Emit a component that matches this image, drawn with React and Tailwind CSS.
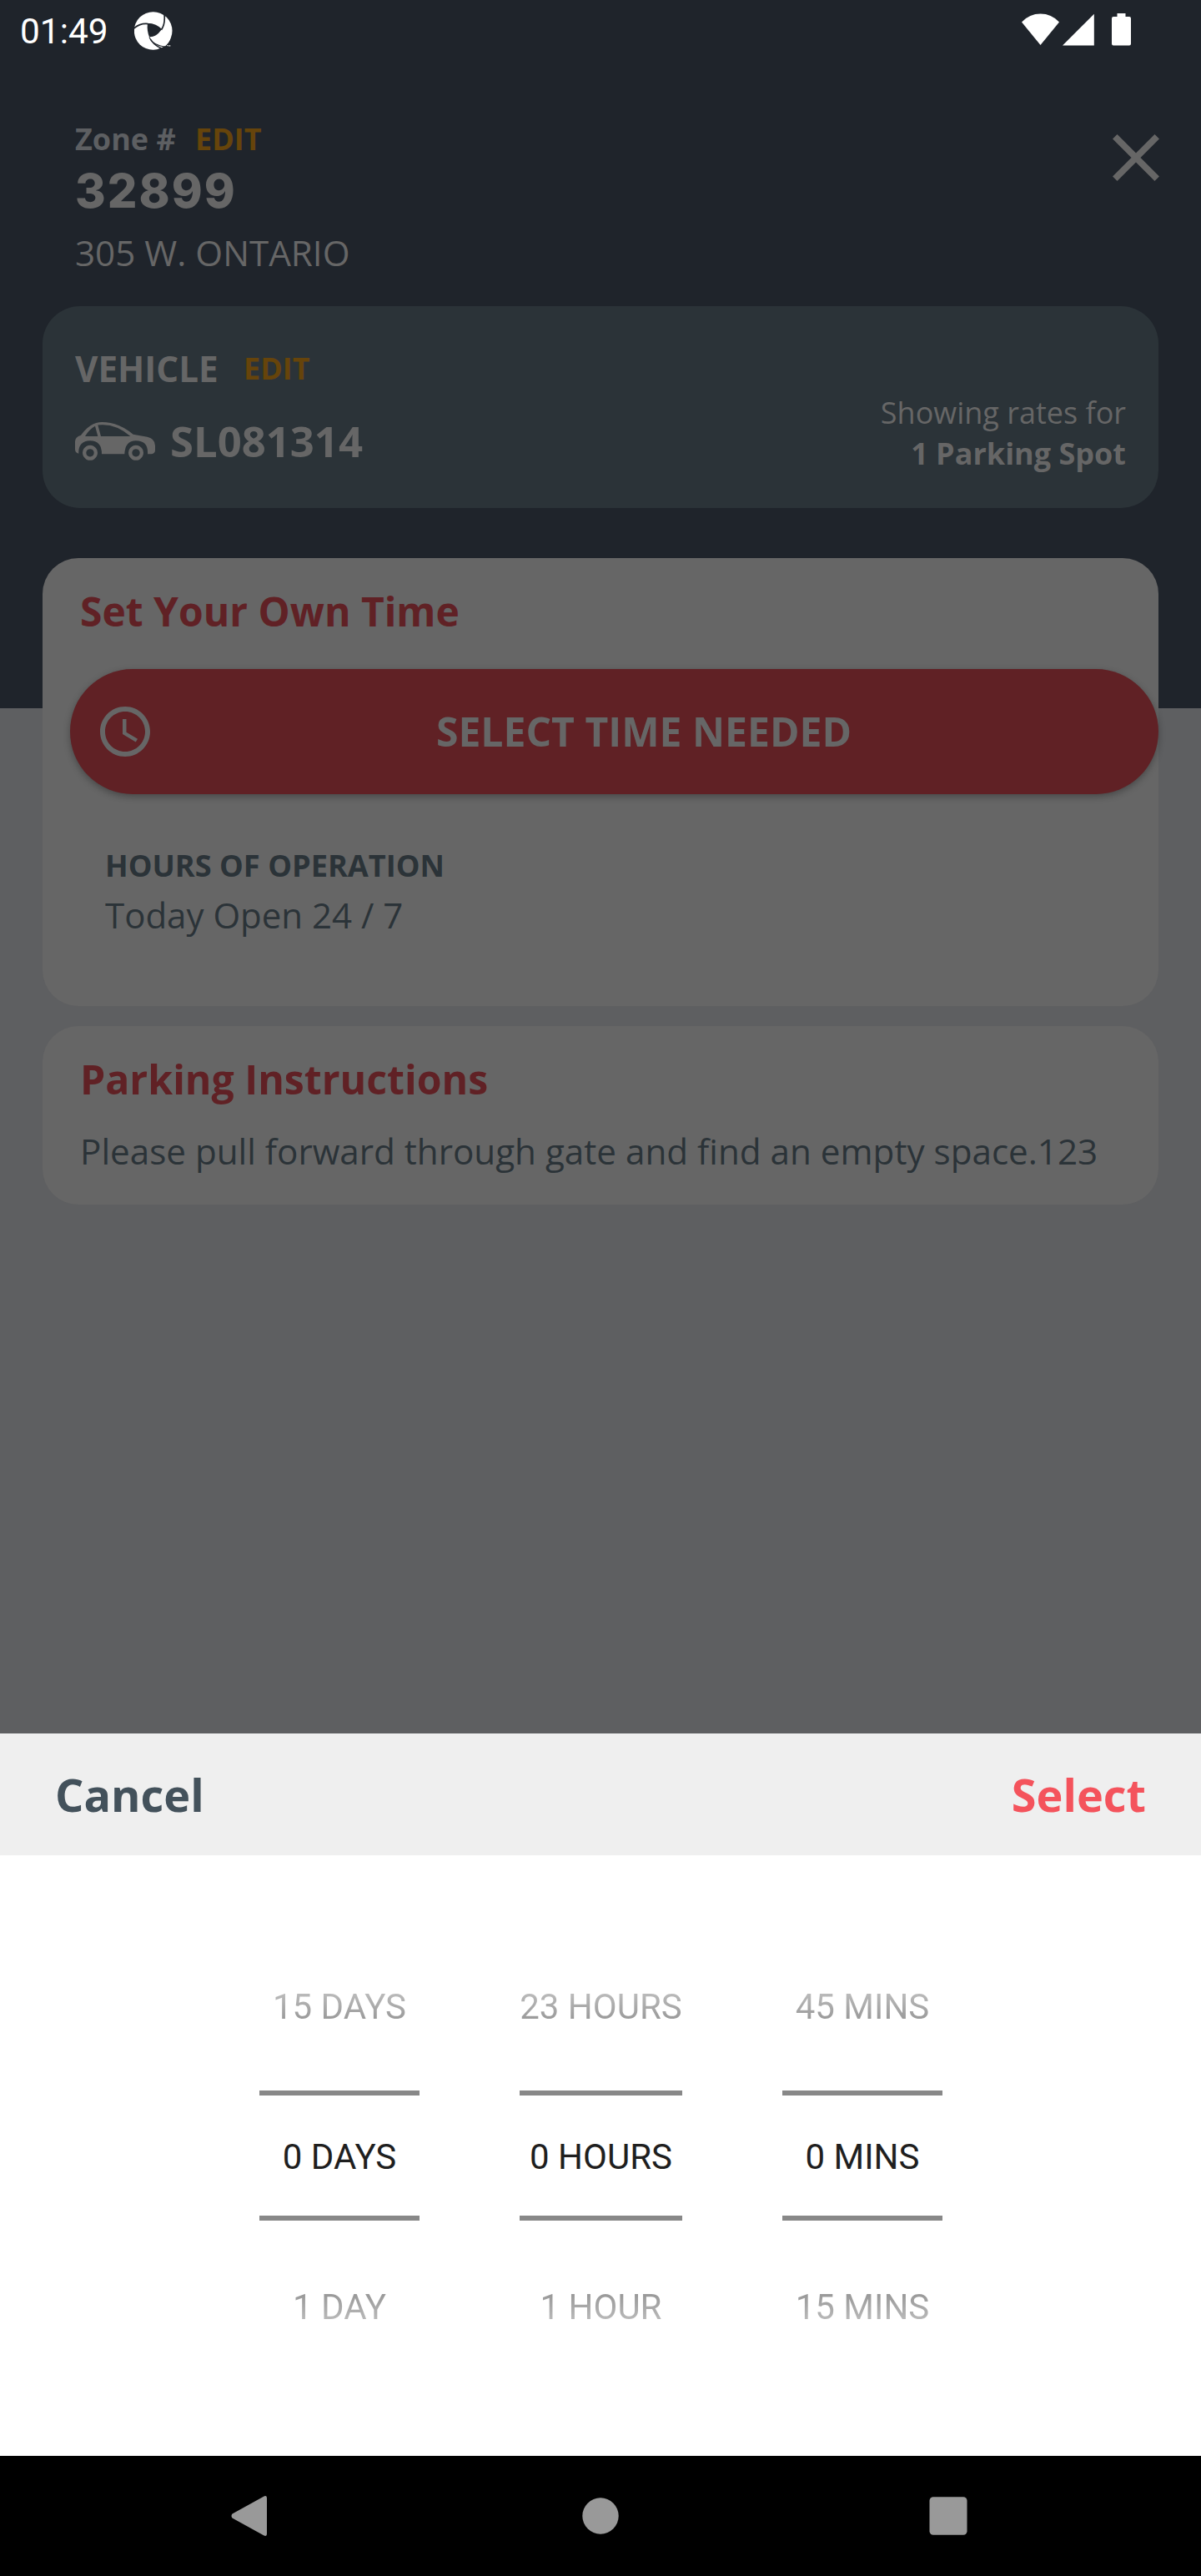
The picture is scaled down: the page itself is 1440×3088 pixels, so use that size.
import React from "react";

function AppLogo() {
  return (
    <svg className="h-[46px] w-[46px]" viewBox="484 41 136 136" fill="none">
      <circle cx="551" cy="109" r="67.5" fill="#fff" />
      <path d="M531 84 Q562 85 580 105 Q562 130 538 133 Q528 108 531 84Z" fill="#1f242b" />
      <path d="M482 101 Q503 81 533 84 M531 84 Q562 85 580 105 M580 105 Q595 84 590 46 M538 131 Q548 156 580 171" stroke="#1f242b" strokeWidth="5" />
      <path d="M570 173 Q588 168 593 160 L625 156 L620 180 L572 180Z" fill="#1f242b" />
      <path d="M538 131 Q556 163 594 163 Q606 153 612 138 L600 120Z" fill="#fff" />
      <path d="M541 138 Q553 160 592 166" stroke="#1f242b" strokeWidth="3.5" />
      <path d="M600 160h5v4h-2v-2h-3zM607 160h5v4h-5z" fill="#fff" />
    </svg>
  );
}

function StatusBar() {
  return (
    <div className="flex h-[74px] items-start justify-between pl-[24px] text-white">
      <div className="flex items-start">
        <span className="mt-[14px] w-[137px] font-['Roboto',sans-serif] text-[42.4px] leading-[48px]">01:49</span>
        <div className="mt-[13.5px]">
          <AppLogo />
        </div>
      </div>
      <div className="flex items-start pr-[84px]">
        <svg className="mt-[16px] h-[39px] w-[46px]" viewBox="0 0 46 39" fill="#fff">
          <path d="M0 10.5 Q9.5 .6 22.5 .6 Q35.500 .6 45 10.500 L22.500 38Z" />
        </svg>
        <svg className="mt-[16px] ml-[3px] h-[39px] w-[38px]" viewBox="0 0 38 39" fill="#fff">
          <path d="M0 38.400 L37.800 .8 V38.400Z" />
        </svg>
        <svg className="mt-[16px] ml-[21px] h-[39px] w-[23px]" viewBox="0 0 23 39" fill="#fff">
          <path d="M6.500 0h10v4H21a2 2 0 0 1 2 2v30.600a2 2 0 0 1-2 2H2a2 2 0 0 1-2-2V6a2 2 0 0 1 2-2h4.500z" />
        </svg>
      </div>
    </div>
  );
}

function CarIcon() {
  return (
    <svg className="mt-[12px] h-[46px] w-[96px]" viewBox="180 467.500 288 138" fill="#666666">
      <path
        fillRule="evenodd"
        d="M193 581 Q180 578 180 565 V538 Q180 522 201 515 Q234 467.500 277 467.500 Q338 468 389 512 L440 521 Q468 528 468 552 V568 Q468 581 455 582 H441 Q444 534 399 534 Q360 534 358 582 H276 Q276 534 234 534 Q190 536 193 581Z M216 518.500 H262 L252 482 Q231 494 216 518.500Z M262 478 L273 518.500 H379 Q331 476 277 477 Q269 477 262 478Z"
      />
      <path fillRule="evenodd" d="M234 551a27 27 0 1 0 .01 0zM234 564a14 14 0 1 1-.01 0z" />
      <path fillRule="evenodd" d="M399 551a27 27 0 1 0 .01 0zM399 564a14 14 0 1 1-.01 0z" />
    </svg>
  );
}

function ZoneHeader() {
  return (
    <header className="flex h-[293px] items-start justify-between pt-[69px] pr-[50px] pl-[90px] text-[#666666]">
      <div className="flex flex-col">
        <div className="flex text-[36px] leading-[48px] font-bold">
          <span className="w-[144px] text-[#5d5f62]">Zone #</span>
          <span className="text-[#66440b]">EDIT</span>
        </div>
        <span className="mt-[6px] font-['Inter',sans-serif] text-[56px] leading-[64px] font-extrabold tracking-[2px]">32899</span>
        <span className="mt-[13px] text-[42.2px] leading-[58px]">305 W. ONTARIO</span>
      </div>
      <svg className="mt-[18px] h-[56px] w-[56px]" viewBox="0 0 56 56" stroke="#666666" strokeWidth="7.800">
        <path d="M2.800 2.800 L53.200 53.200 M53.200 2.800 L2.800 53.200" />
      </svg>
    </header>
  );
}

function VehicleCard() {
  return (
    <section className="flex h-[242px] justify-between rounded-[45px] bg-[#2b3338] pr-[39px] pl-[39px] text-[#666666]">
      <div className="flex flex-col pt-[46px]">
        <div className="flex items-start font-bold">
          <span className="w-[202px] text-[42.2px] leading-[58px]">VEHICLE</span>
          <span className="mt-[5px] text-[36px] leading-[48px] text-[#66440b]">EDIT</span>
        </div>
        <div className="mt-[23px] flex items-start">
          <CarIcon />
          <span className="ml-[18px] text-[50.8px] leading-[70px] font-bold">SL081314</span>
        </div>
      </div>
      <div className="flex flex-col items-end justify-end pb-[41px] text-[36px] leading-[49px]">
        <span>Showing rates for</span>
        <span className="font-bold">1 Parking Spot</span>
      </div>
    </section>
  );
}

function TimeCard() {
  return (
    <section className="mt-[60px] flex h-[537px] flex-col rounded-[43px] bg-[#666666] pt-[31px]">
      <h2 className="pl-[45px] text-[48px] leading-[66px] font-bold text-[#602125]">Set Your Own Time</h2>
      <button className="mt-[36px] ml-[33px] flex h-[150px] shrink-0 items-center rounded-full bg-[#602125] pr-[31px] pl-[30px] shadow-[0_3px_8px_rgba(0,0,0,0.3)]">
        <svg className="h-[72px] w-[72px]" viewBox="0 0 24 24" fill="#666666">
          <path d="M11.990 2C6.470 2 2 6.480 2 12s4.470 10 9.990 10C17.520 22 22 17.520 22 12S17.520 2 11.990 2zM12 20c-4.420 0-8-3.580-8-8s3.580-8 8-8 8 3.580 8 8-3.580 8-8 8z" />
          <path d="M12.500 7H11v6l5.250 3.150.75-1.230-4.500-2.670z" />
        </svg>
        <span className="flex-1 text-center text-[48.1px] leading-[66px] font-bold text-[#666666]">SELECT TIME NEEDED</span>
      </button>
      <div className="mt-[61px] flex flex-col pl-[75px] text-[#2b3338]">
        <span className="text-[36.2px] leading-[48px] font-bold">HOURS OF OPERATION</span>
        <span className="mt-[7px] text-[42px] leading-[58px]">Today Open 24 / 7</span>
      </div>
    </section>
  );
}

function InstructionsCard() {
  return (
    <section className="mt-[24px] flex h-[214px] flex-col rounded-[43px] bg-[#666666] pt-[30px] pl-[45px]">
      <h2 className="text-[48.200px] leading-[66px] font-bold text-[#602125]">Parking Instructions</h2>
      <p className="mt-[25px] text-[42.2px] leading-[58px] whitespace-nowrap text-[#2b3338]">
        Please pull forward through gate and find an empty space.123
      </p>
    </section>
  );
}

const wheels = [
  { width: "w-[192px]", prev: "15 DAYS", current: "0 DAYS", next: "1 DAY" },
  { width: "w-[195px]", prev: "23 HOURS", current: "0 HOURS", next: "1 HOUR" },
  { width: "w-[192px]", prev: "45 MINS", current: "0 MINS", next: "15 MINS" },
];

function Wheel({ width, prev, current, next }) {
  return (
    <div className={`${width} flex flex-col text-center font-['Roboto',sans-serif] text-[42px] leading-[50px] whitespace-nowrap`}>
      <span className="bg-[linear-gradient(#c4c4c4,#8f8f8f)] bg-clip-text text-transparent">{prev}</span>
      <div className="mt-[75px] h-[6px] bg-[#888888]" />
      <span className="mt-[49px] text-[#1f1f1f]">{current}</span>
      <div className="mt-[45px] h-[6px] bg-[#888888]" />
      <span className="mt-[79px] bg-[linear-gradient(#8f8f8f,#c4c4c4)] bg-clip-text text-transparent">{next}</span>
    </div>
  );
}

function TimePickerSheet() {
  return (
    <div className="flex flex-col">
      <div className="flex h-[146px] items-center justify-between bg-[#efefef] px-[66px] text-[54px] leading-[74px] font-bold">
        <button className="text-[#43515b]">Cancel</button>
        <button className="text-[#f4535c]">Select</button>
      </div>
      <div className="flex h-[720px] items-start gap-[120px] bg-white pt-[157px] pl-[311px]">
        {wheels.map((w) => (
          <Wheel key={w.current} {...w} />
        ))}
      </div>
    </div>
  );
}

function NavBar() {
  return (
    <nav className="flex h-[144px] items-center gap-[357px] bg-black pl-[273px]">
      <svg className="h-[60px] w-[60px]" viewBox="0 0 60 60" fill="#999999">
        <path d="M5.500 27.500 L43.500 6.500 Q47 5 47 9 V51 Q47 55 43.500 53.500 L5.500 32.500 Q3.500 30 5.500 27.500Z" />
      </svg>
      <svg className="h-[60px] w-[60px]" viewBox="0 0 60 60" fill="#999999">
        <circle cx="30" cy="30" r="21.700" />
      </svg>
      <svg className="h-[60px] w-[60px]" viewBox="0 0 60 60" fill="#999999">
        <rect x="7.500" y="7.200" width="45" height="45.500" rx="4.500" />
      </svg>
    </nav>
  );
}

export default function App() {
  return (
    <div className="flex h-[3088px] w-[1440px] flex-col overflow-hidden font-['Open_Sans',sans-serif]">
      <div className="flex h-[2078px] flex-col bg-[linear-gradient(#1f242b_849px,#5e5f61_849px)]">
        <StatusBar />
        <ZoneHeader />
        <main className="flex flex-col px-[51px]">
          <VehicleCard />
          <TimeCard />
          <InstructionsCard />
        </main>
      </div>
      <TimePickerSheet />
      <NavBar />
    </div>
  );
}
